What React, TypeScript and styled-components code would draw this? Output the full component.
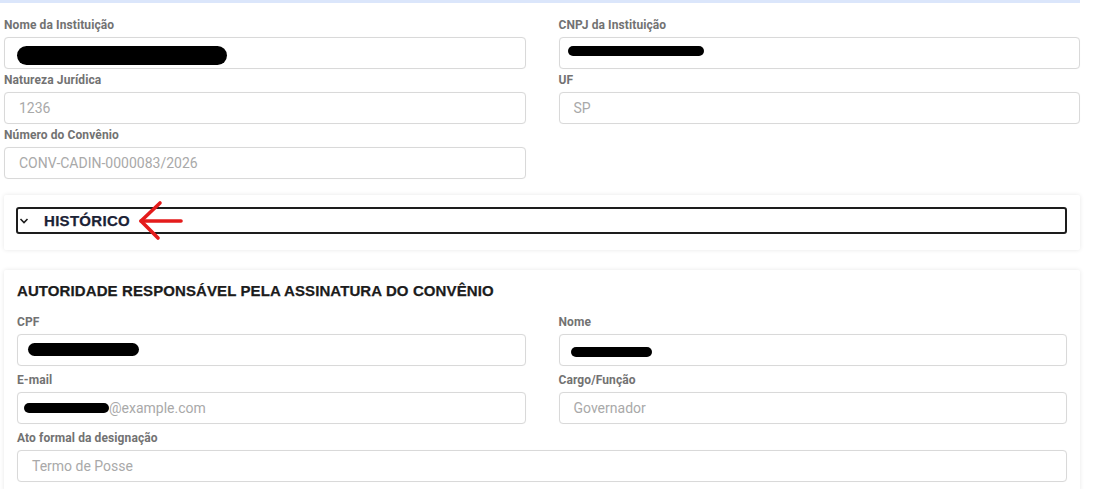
import React from "react";
import styled, { createGlobalStyle } from "styled-components";

const GlobalStyle = createGlobalStyle`
  html, body { margin: 0; padding: 0; background: #ffffff; }
  body { font-family: Roboto, "Liberation Sans", Arial, sans-serif; }
  * { box-sizing: border-box; }
`;

const Page = styled.div`
  width: 1100px;
  padding-right: 20px;
  display: flex;
  flex-direction: column;
`;

const InstitutionSection = styled.section`
  border-top: 3px solid #dbe6fb;
  padding: 14px 0 0 4px;
`;

const FormGrid = styled.div<{ $rowGap: number }>`
  display: grid;
  grid-template-columns: 1fr 1fr;
  column-gap: 33px;
  row-gap: ${(p) => p.$rowGap}px;
`;

const Field = styled.div<{ $labelGap: number; $full?: boolean }>`
  display: flex;
  flex-direction: column;
  gap: ${(p) => p.$labelGap}px;
  grid-column: ${(p) => (p.$full ? "1 / -1" : "auto")};
`;

const Label = styled.label`
  font-size: 12px;
  line-height: 16px;
  font-weight: 700;
  color: #727272;
  letter-spacing: 0.1px;
`;

const InputBox = styled.div`
  height: 32px;
  border: 1px solid #d9d9d9;
  border-radius: 4px;
  background: #fff;
  padding: 0 14px;
  display: flex;
  align-items: center;
  font-size: 14px;
  color: #a9a9a9;
  box-shadow: 0 0 1px rgba(0, 0, 0, 0.05);
`;

const Redaction = styled.span<{ $w: number; $h: number; $shift?: number; $dy?: number }>`
  display: inline-block;
  width: ${(p) => p.$w}px;
  height: ${(p) => p.$h}px;
  background: #000;
  border-radius: ${(p) => p.$h / 2}px;
  margin-left: ${(p) => p.$shift ?? 0}px;
  transform: translateY(${(p) => p.$dy ?? 0}px);
  flex-shrink: 0;
`;

const Card = styled.section`
  margin-left: 4px;
  background: #fff;
  box-shadow: 0 0 4px rgba(0, 0, 0, 0.1);
  border-radius: 2px;
`;

const HistoryCard = styled(Card)`
  margin-top: 16px;
  padding: 12px 13px 16px 12px;
`;

const HistoryToggle = styled.div`
  position: relative;
  height: 27px;
  border: 2px solid #1d1d1d;
  border-radius: 3px;
  display: flex;
  align-items: center;
  gap: 15px;
  padding-left: 1px;
`;

const HeavyText = `
  font-family: "Liberation Sans", Arial, sans-serif;
  font-size: 15px;
  font-weight: 700;
  -webkit-text-stroke: 0.25px currentColor;
`;

const HistoryTitle = styled.span`
  ${HeavyText}
  color: #1b2235;
  letter-spacing: 0.3px;
`;

const Annotation = styled.svg`
  position: absolute;
  left: 121px;
  top: -9px;
  overflow: visible;
`;

const AuthorityCard = styled(Card)`
  margin-top: 20px;
  padding: 12px 13px 10px 13px;
`;

const CardTitle = styled.h2`
  ${HeavyText}
  margin: 0 0 14px 0;
  line-height: 18px;
  color: #1c1c1c;
  letter-spacing: 0.1px;
`;

const Chevron = () => (
  <svg width="10" height="8" viewBox="0 0 10 8">
    <polyline points="1.5,2 5,5.5 8.5,2" fill="none" stroke="#1d1d1d" strokeWidth="1.6" />
  </svg>
);

export default function App() {
  return (
    <>
      <GlobalStyle />
      <Page>
        <InstitutionSection>
          <FormGrid $rowGap={3}>
            <Field $labelGap={4}>
              <Label>Nome da Instituição</Label>
              <InputBox>
                <Redaction $w={210} $h={19} $shift={-2} $dy={2} />
              </InputBox>
            </Field>
            <Field $labelGap={4}>
              <Label>CNPJ da Instituição</Label>
              <InputBox>
                <Redaction $w={136} $h={10} $shift={-6} $dy={-2} />
              </InputBox>
            </Field>
            <Field $labelGap={4}>
              <Label>Natureza Jurídica</Label>
              <InputBox>1236</InputBox>
            </Field>
            <Field $labelGap={4}>
              <Label>UF</Label>
              <InputBox>SP</InputBox>
            </Field>
            <Field $labelGap={4}>
              <Label>Número do Convênio</Label>
              <InputBox>CONV-CADIN-0000083/2026</InputBox>
            </Field>
          </FormGrid>
        </InstitutionSection>

        <HistoryCard>
          <HistoryToggle>
            <Chevron />
            <HistoryTitle>HISTÓRICO</HistoryTitle>
            <Annotation width="44" height="40" viewBox="0 0 44 40">
              <g fill="none" stroke="#e41b1b" strokeWidth="3.6" strokeLinecap="round" strokeLinejoin="round">
                <path d="M2 21 L42 21" />
                <path d="M21 3 L2 21 L19 38" />
              </g>
            </Annotation>
          </HistoryToggle>
        </HistoryCard>

        <AuthorityCard>
          <CardTitle>AUTORIDADE RESPONSÁVEL PELA ASSINATURA DO CONVÊNIO</CardTitle>
          <FormGrid $rowGap={6}>
            <Field $labelGap={4}>
              <Label>CPF</Label>
              <InputBox>
                <Redaction $w={111} $h={13} $shift={-4} $dy={-1} />
              </InputBox>
            </Field>
            <Field $labelGap={4}>
              <Label>Nome</Label>
              <InputBox>
                <Redaction $w={81} $h={10} $shift={-3} $dy={2} />
              </InputBox>
            </Field>
            <Field $labelGap={4}>
              <Label>E-mail</Label>
              <InputBox>
                <Redaction $w={85} $h={10} $shift={-8} />
                <span>@example.com</span>
              </InputBox>
            </Field>
            <Field $labelGap={4}>
              <Label>Cargo/Função</Label>
              <InputBox>Governador</InputBox>
            </Field>
            <Field $labelGap={4} $full>
              <Label>Ato formal da designação</Label>
              <InputBox>Termo de Posse</InputBox>
            </Field>
          </FormGrid>
        </AuthorityCard>
      </Page>
    </>
  );
}
